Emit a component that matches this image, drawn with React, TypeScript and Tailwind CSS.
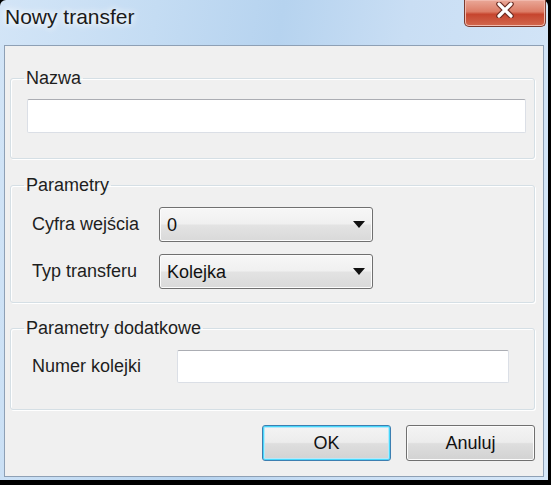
const font = { fontFamily: '"Liberation Sans", Arial, sans-serif' };

const Arrow = () => (
  <svg width="12" height="7" viewBox="0 0 12 7" className="shrink-0">
    <path d="M0 0 H12 L6 7 Z" fill="#111" />
  </svg>
);

const Combo = ({ value }: { value: string }) => (
  <div className="flex h-[35px] w-[214px] items-center justify-between rounded-[3px] border border-[#707070] bg-[linear-gradient(to_bottom,#f7f7f7_0%,#f0f0f0_48%,#e3e3e3_52%,#d9d9d9_100%)] pl-[7px] pr-[7px] shadow-[inset_0_0_0_1px_#fcfcfc] text-[18px] text-[#111]">
    <span className="leading-none">{value}</span>
    <Arrow />
  </div>
);

const TextBox = ({ className }: { className: string }) => (
  <div
    className={`rounded-[2px] border border-[#dbdfe6] border-t-[#abadb3] bg-white ${className}`}
  />
);

const Group = ({ title, children, pb }: { title: string; children: React.ReactNode; pb: string }) => (
  <fieldset
    className={`rounded-[3px] border border-[#d5dfe5] shadow-[inset_1px_1px_0_#ffffff,1px_1px_0_#ffffff] ${pb}`}
  >
    <legend className="ml-[13px] px-[2px] text-[18px] leading-[20px] text-[#1e1e1e]">{title}</legend>
    {children}
  </fieldset>
);

const Button = ({ label, primary }: { label: string; primary?: boolean }) => (
  <button
    className={`h-[36px] w-[129px] rounded-[3px] border text-[18px] text-[#111] bg-[linear-gradient(to_bottom,#f4f4f4_0%,#ececec_48%,#dedede_52%,#d2d2d2_100%)] ${
      primary
        ? 'border-[#3c7fb1] shadow-[inset_0_0_0_1px_#48d8fb,inset_0_0_0_2px_#b6e8fa]'
        : 'border-[#707070] shadow-[inset_0_0_0_1px_#fcfcfc]'
    }`}
  >
    {label}
  </button>
);

export default function App() {
  return (
    <div className="h-[485px] w-[551px] overflow-hidden bg-black" style={font}>
      <div className="flex h-[480px] w-[548px] flex-col rounded-t-[6px] bg-[linear-gradient(100deg,#d3e5f7_0%,#c4dcf3_25%,#b6d3ef_45%,#c9def4_65%,#d6e7f8_100%)] px-[4px] pb-[3px]">
        {/* title bar */}
        <div className="flex h-[45px] shrink-0 items-start justify-between">
          <div className="pl-[1px] pt-[5px] text-[21px] leading-[24px] text-[#1b1b1b] [text-shadow:0_0_6px_#ffffff,0_0_10px_#ffffff]">
            Nowy transfer
          </div>
          <div className="mr-[-2px] flex h-[27px] w-[82px] items-center justify-center rounded-b-[5px] border border-t-0 border-[#7a3a2e] bg-[linear-gradient(to_bottom,#eaa898_0%,#dc7c66_45%,#c6452e_55%,#d2684e_100%)] shadow-[inset_0_0_0_1px_#f1b9ad]">
            <svg width="20" height="16" viewBox="0 0 20 16" className="mt-[-6px]">
              <path
                d="M4 2 L16 14 M16 2 L4 14"
                stroke="#6b2a20"
                strokeWidth="5.5"
                strokeLinecap="round"
              />
              <path
                d="M4 2 L16 14 M16 2 L4 14"
                stroke="#ffffff"
                strokeWidth="3.2"
                strokeLinecap="round"
              />
            </svg>
          </div>
        </div>

        {/* client area */}
        <div className="flex flex-1 flex-col border border-[#8ea0b5] bg-[#f0f0f0] pl-[5px] pr-[8px] pt-[22px]">
          <Group title="Nazwa" pb="pb-[25px]">
            <div className="pl-[16px] pr-[8px] pt-[11px]">
              <TextBox className="h-[34px] w-full" />
            </div>
          </Group>

          <div className="mt-[16px]">
            <Group title="Parametry" pb="pb-[13px]">
              <div className="flex flex-col gap-[12px] pl-[21px] pt-[12px]">
                <div className="flex items-center">
                  <span className="w-[127px] text-[18px] text-[#1e1e1e]">Cyfra wejścia</span>
                  <Combo value="0" />
                </div>
                <div className="flex items-center">
                  <span className="w-[127px] text-[18px] text-[#1e1e1e]">Typ transferu</span>
                  <Combo value="Kolejka" />
                </div>
              </div>
            </Group>
          </div>

          <div className="mt-[15px]">
            <Group title="Parametry dodatkowe" pb="pb-[26px]">
              <div className="flex items-center pl-[21px] pt-[12px]">
                <span className="w-[145px] text-[18px] text-[#1e1e1e]">Numer kolejki</span>
                <TextBox className="h-[33px] w-[332px]" />
              </div>
            </Group>
          </div>

          <div className="mt-[15px] flex justify-end gap-[15px]">
            <Button label="OK" primary />
            <Button label="Anuluj" />
          </div>
        </div>
      </div>
    </div>
  );
}
